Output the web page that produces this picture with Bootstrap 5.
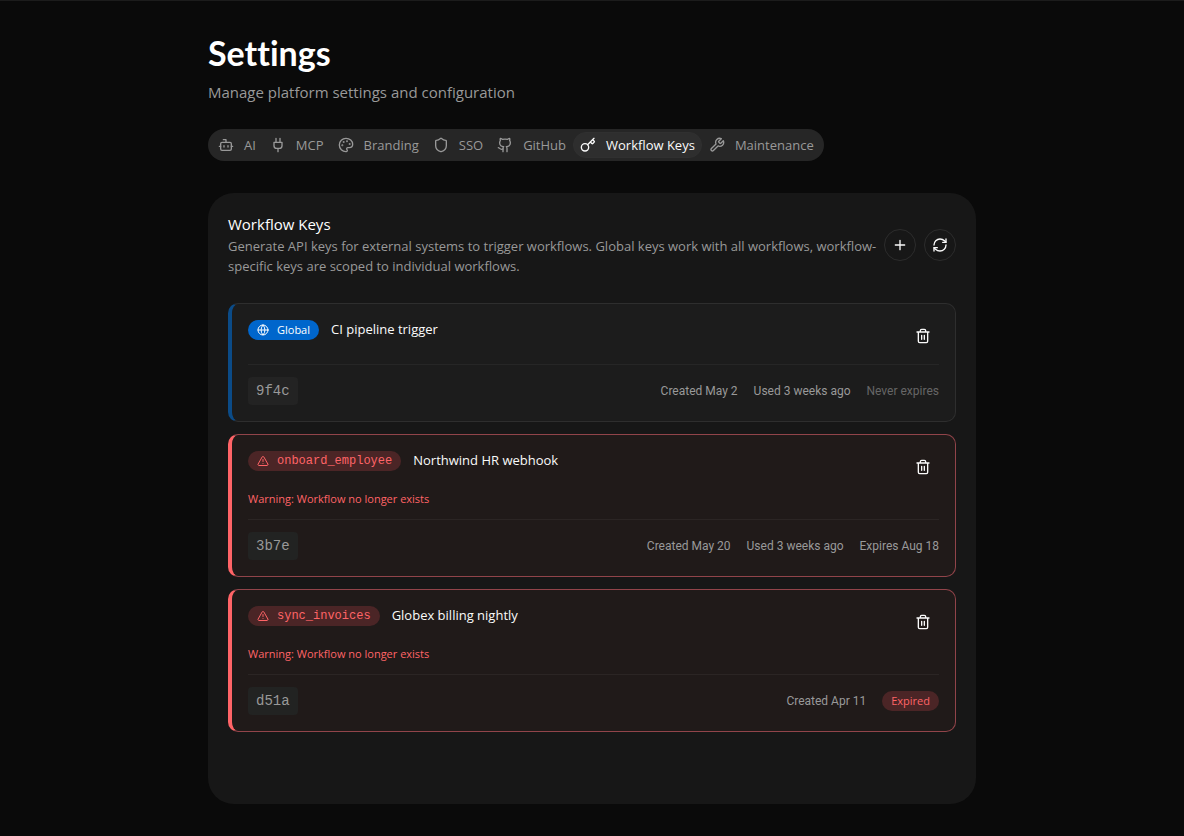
<!DOCTYPE html>
<html lang="en" data-bs-theme="dark">
<head>
<meta charset="utf-8">
<meta name="viewport" content="width=device-width, initial-scale=1">
<title>Settings</title>
<link href="https://cdn.jsdelivr.net/npm/bootstrap@5.3.0/dist/css/bootstrap.min.css" rel="stylesheet">
<style>
  :root { --line: #262626; --muted: #999; --danger: #ff6467; }
  body { background: #0a0a0a; color: #fafafa; font-family: "Open Sans", "Liberation Sans", sans-serif; font-size: 13px; line-height: 20px; border-top: 1px solid #1c1c1c; }
  svg { fill: none; stroke: currentColor; stroke-width: 2; stroke-linecap: round; stroke-linejoin: round; flex: none; width: 16px; height: 16px; }
  .page { max-width: 768px; padding-top: 32px; padding-bottom: 32px; }
  .page-title { font-family: Lato, "Liberation Sans", sans-serif; font-size: 34px; font-weight: 700; line-height: 40px; font-variant-ligatures: none; }
  .page-sub { font-size: 15px; line-height: 22px; margin-top: 8px; }
  .soft { color: var(--muted); }
  .tabs { background: #262626; padding: 3px; margin-top: 26px; max-width: 100%; }
  .tabs .nav-link { display: flex; align-items: center; gap: 10px; height: 26px; padding: 0 6px; border: 1px solid transparent; border-radius: 13px; color: var(--muted); white-space: nowrap; }
  .tabs .nav-link.active { background: #2e2e2e; border-color: #303030; color: #fafafa; }
  .panel { background: #171717; border-radius: 26px; margin-top: 32px; padding: 20px 20px 72px; }
  .panel-title { font-size: 15px; font-weight: 500; line-height: 23px; }
  .btn-round { width: 32px; height: 32px; padding: 0; border-radius: 16px; color: #fafafa; display: flex; align-items: center; justify-content: center; }
  .btn-ring { border: 1px solid #2c2c2c; }
  .keys { margin-top: 27px; }
  .keys, .name-row { gap: 12px; }
  .key { background: #1c1c1c; border: 1px solid #2e2e2e; border-left: 4px solid #0b4b87; border-radius: 10px; padding: 16px; }
  .key-broken { background: #201a19; border-color: #91444a; border-left-color: var(--danger); }
  .key-name { line-height: 18px; padding-bottom: 2px; }
  .meta-text { font-family: Roboto, "Liberation Sans", sans-serif; font-size: 12px; line-height: 16px; }
  .label-text { font-family: "Open Sans", "Liberation Sans", sans-serif; font-size: 11px; line-height: 16px; }
  .pill { display: inline-flex; align-items: center; gap: 8px; height: 20px; padding: 0 9px; border-radius: 10px; background: #06c; color: #fff; }
  .pill svg { width: 12px; height: 12px; }
  .pill-danger { background: #4b2526; color: var(--danger); }
  .mono { font-family: "Liberation Mono", monospace; }
  .key-foot { border-top: 1px solid var(--line); margin-top: 12px; padding-top: 12px; }
  .key-broken .key-foot { border-color: #2b2524; }
  .prefix { background: #232323; color: var(--muted); border-radius: 4px; font-size: 14px; line-height: 20px; padding: 4px 8px; }
  .key-broken .prefix { background: #222322; }
  .warn { color: var(--danger); }
  .dim { color: #666; }
</style>
</head>
<body>
<svg class="d-none" aria-hidden="true">
  <symbol id="trash" viewBox="0 0 24 24"><path d="M10 11v6M14 11v6M19 6v14a2 2 0 0 1-2 2H7a2 2 0 0 1-2-2V6M3 6h18M8 6V4a2 2 0 0 1 2-2h4a2 2 0 0 1 2 2v2"/></symbol>
  <symbol id="alert" viewBox="0 0 24 24"><path d="m21.73 18-8-14a2 2 0 0 0-3.48 0l-8 14A2 2 0 0 0 4 21h16a2 2 0 0 0 1.73-3M12 9v4M12 17h.01"/></symbol>
</svg>
<main class="container-fluid page px-0">
  <h1 class="page-title mb-0">Settings</h1>
  <p class="page-sub soft mb-0">Manage platform settings and configuration</p>

  <ul class="nav tabs d-inline-flex rounded-pill">
    <li class="nav-item"><a class="nav-link" href="#ai"><svg viewBox="0 0 24 24"><path d="M12 8V4H8"/><rect width="16" height="12" x="4" y="8" rx="2"/><path d="M2 14h2M20 14h2M15 13v2M9 13v2"/></svg>AI</a></li>
    <li class="nav-item"><a class="nav-link" href="#mcp"><svg viewBox="0 0 24 24"><path d="M12 22v-5M9 8V2M15 8V2M18 8v5a4 4 0 0 1-4 4h-4a4 4 0 0 1-4-4V8Z"/></svg>MCP</a></li>
    <li class="nav-item"><a class="nav-link" href="#branding"><svg viewBox="0 0 24 24"><path d="M12 22a1 1 0 0 1 0-20 10 9 0 0 1 10 9 5 5 0 0 1-5 5h-2.25a1.75 1.75 0 0 0-1.4 2.8l.3.4a1.75 1.75 0 0 1-1.4 2.8z"/><g fill="currentColor"><circle cx="13.5" cy="6.5" r=".5"/><circle cx="17.5" cy="10.5" r=".5"/><circle cx="6.5" cy="12.5" r=".5"/><circle cx="8.5" cy="7.5" r=".5"/></g></svg>Branding</a></li>
    <li class="nav-item"><a class="nav-link" href="#sso"><svg viewBox="0 0 24 24"><path d="M20 13c0 5-3.5 7.5-7.66 8.95a1 1 0 0 1-.67-.01C7.5 20.5 4 18 4 13V6a1 1 0 0 1 1-1c2 0 4.5-1.2 6.24-2.72a1.17 1.17 0 0 1 1.52 0C14.51 3.81 17 5 19 5a1 1 0 0 1 1 1z"/></svg>SSO</a></li>
    <li class="nav-item"><a class="nav-link" href="#github"><svg viewBox="0 0 24 24"><path d="M15 22v-4a4.8 4.8 0 0 0-1-3.5c3 0 6-2 6-5.5.08-1.25-.27-2.48-1-3.5.28-1.15.28-2.35 0-3.5 0 0-1 0-3 1.5-2.64-.5-5.36-.5-8 0C6 2 5 2 5 2c-.3 1.15-.3 2.35 0 3.5A5.403 5.403 0 0 0 4 9c0 3.5 3 5.5 6 5.5-.39.49-.68 1.05-.85 1.65-.17.6-.22 1.23-.15 1.85v4"/><path d="M9 18c-4.51 2-5-2-7-2"/></svg>GitHub</a></li>
    <li class="nav-item"><a class="nav-link active" aria-current="page" href="#keys"><svg viewBox="0 0 24 24"><path d="m15.5 7.5 2.3 2.3a1 1 0 0 0 1.4 0l2.1-2.1a1 1 0 0 0 0-1.4L19 4M21 2l-9.6 9.6"/><circle cx="7.5" cy="15.5" r="5.5"/></svg>Workflow Keys</a></li>
    <li class="nav-item"><a class="nav-link" href="#maintenance"><svg viewBox="0 0 24 24"><path d="M14.7 6.3a1 1 0 0 0 0 1.4l1.6 1.6a1 1 0 0 0 1.4 0l3.77-3.77a6 6 0 0 1-7.94 7.94l-6.91 6.91a2.12 2.12 0 0 1-3-3l6.91-6.91a6 6 0 0 1 7.94-7.94l-3.76 3.76z"/></svg>Maintenance</a></li>
  </ul>

  <section class="panel">
    <header class="d-flex align-items-center">
      <div class="flex-grow-1">
        <h2 class="panel-title mb-0">Workflow Keys</h2>
        <p class="soft mb-0">Generate API keys for external systems to trigger workflows. Global keys work with all workflows, workflow-specific keys are scoped to individual workflows.</p>
      </div>
      <div class="d-flex gap-2">
        <button type="button" class="btn btn-round btn-ring" aria-label="Create key"><svg viewBox="0 0 24 24"><path d="M5 12h14M12 5v14"/></svg></button>
        <button type="button" class="btn btn-round btn-ring" aria-label="Refresh"><svg viewBox="0 0 24 24"><path d="M3 12a9 9 0 0 1 9-9 9.75 9.75 0 0 1 6.74 2.74L21 8"/><path d="M21 3v5h-5M21 12a9 9 0 0 1-9 9 9.75 9.75 0 0 1-6.74-2.74L3 16"/><path d="M8 16H3v5"/></svg></button>
      </div>
    </header>

    <div class="keys d-grid">
      <article class="key">
        <div class="d-flex justify-content-between align-items-start">
          <div class="d-flex align-items-center name-row">
            <span class="pill label-text"><svg viewBox="0 0 24 24"><circle cx="12" cy="12" r="10"/><path d="M12 2a14.5 14.5 0 0 0 0 20 14.5 14.5 0 0 0 0-20M2 12h20"/></svg>Global</span>
            <span class="key-name">CI pipeline trigger</span>
          </div>
          <button type="button" class="btn btn-round border-0" aria-label="Delete key"><svg><use href="#trash"/></svg></button>
        </div>
        <div class="key-foot d-flex justify-content-between align-items-center">
          <span class="prefix mono">9f4c</span>
          <div class="d-flex gap-3 meta-text soft"><span>Created May 2</span><span>Used 3 weeks ago</span><span class="dim">Never expires</span></div>
        </div>
      </article>

      <article class="key key-broken">
        <div class="d-flex justify-content-between align-items-start">
          <div class="d-flex align-items-center name-row">
            <span class="pill pill-danger meta-text mono"><svg><use href="#alert"/></svg>onboard_employee</span>
            <span class="key-name">Northwind HR webhook</span>
          </div>
          <button type="button" class="btn btn-round border-0" aria-label="Delete key"><svg><use href="#trash"/></svg></button>
        </div>
        <p class="warn label-text mt-2 mb-0">Warning: Workflow no longer exists</p>
        <div class="key-foot d-flex justify-content-between align-items-center">
          <span class="prefix mono">3b7e</span>
          <div class="d-flex gap-3 meta-text soft"><span>Created May 20</span><span>Used 3 weeks ago</span><span>Expires Aug 18</span></div>
        </div>
      </article>

      <article class="key key-broken">
        <div class="d-flex justify-content-between align-items-start">
          <div class="d-flex align-items-center name-row">
            <span class="pill pill-danger meta-text mono"><svg><use href="#alert"/></svg>sync_invoices</span>
            <span class="key-name">Globex billing nightly</span>
          </div>
          <button type="button" class="btn btn-round border-0" aria-label="Delete key"><svg><use href="#trash"/></svg></button>
        </div>
        <p class="warn label-text mt-2 mb-0">Warning: Workflow no longer exists</p>
        <div class="key-foot d-flex justify-content-between align-items-center">
          <span class="prefix mono">d51a</span>
          <div class="d-flex gap-3 align-items-center meta-text soft"><span>Created Apr 11</span><span class="pill pill-danger label-text">Expired</span></div>
        </div>
      </article>
    </div>
  </section>
</main>
<script src="https://cdn.jsdelivr.net/npm/bootstrap@5.3.0/dist/js/bootstrap.bundle.min.js"></script>
</body>
</html>
